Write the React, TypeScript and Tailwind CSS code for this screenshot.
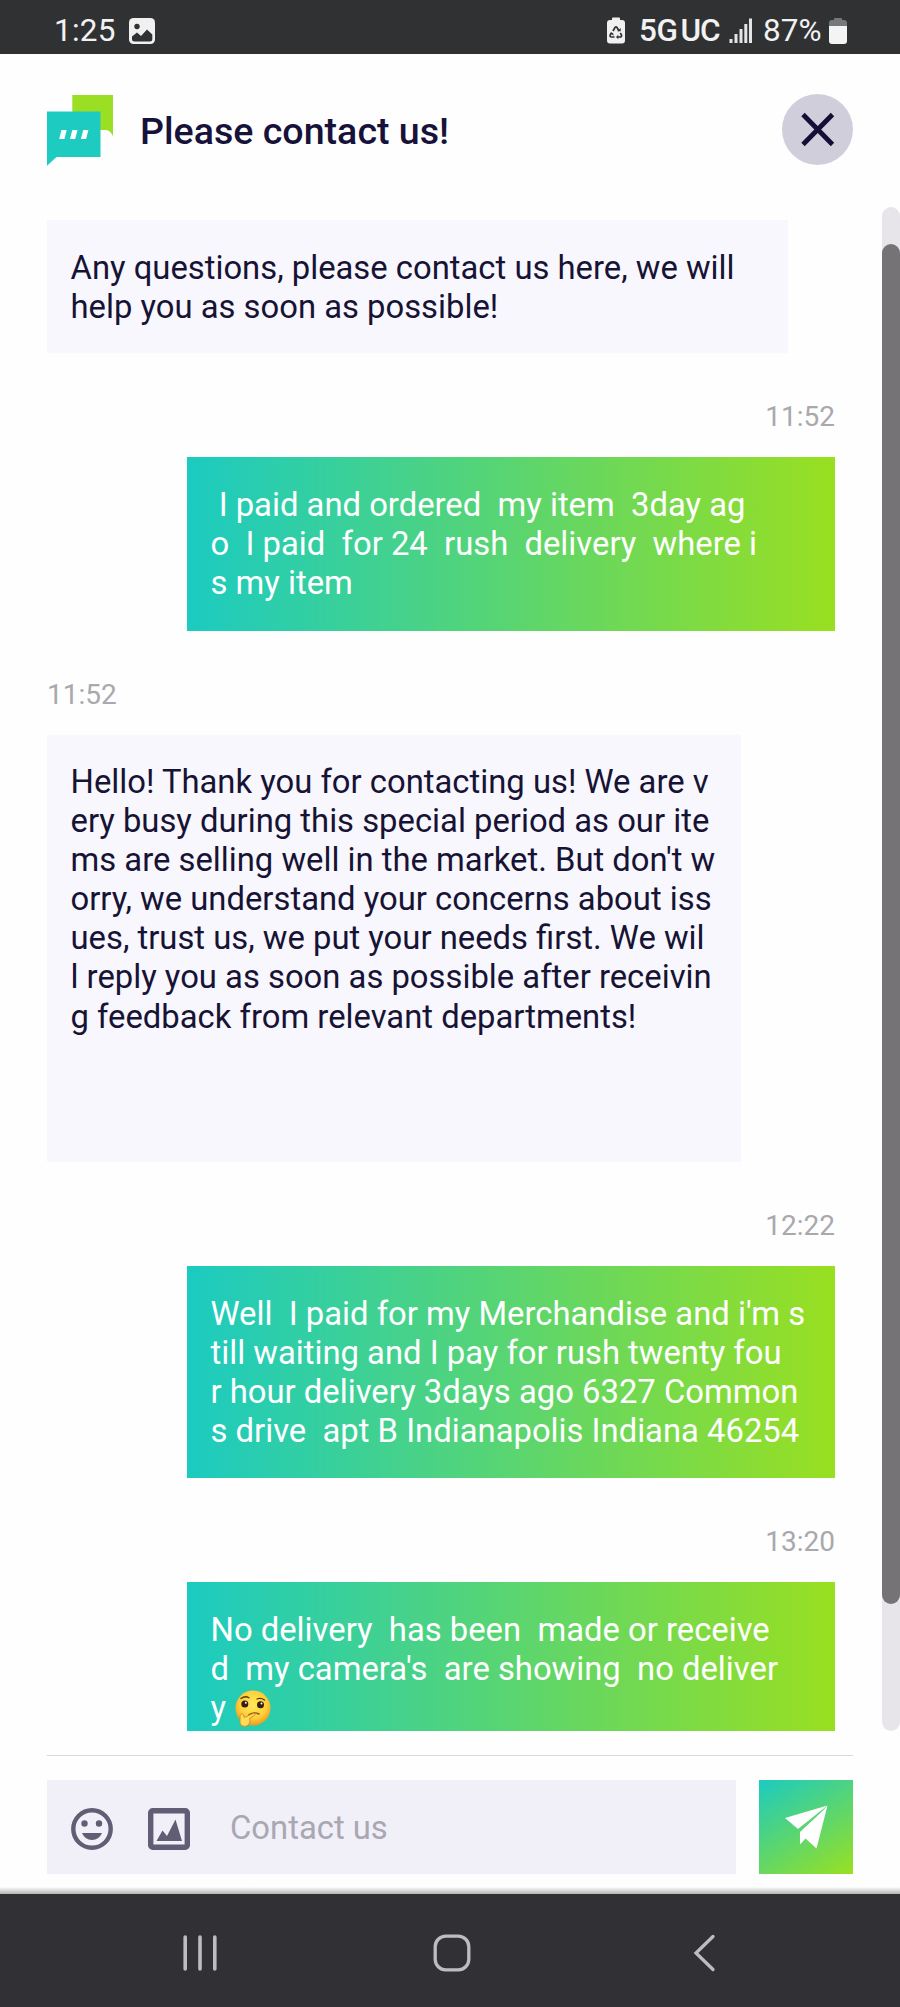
type Message = {
    from: 'me' | 'shop'
    time?: string
    text: string
    emoji?: boolean
    box: string
}

const messages: Message[] = [
    {
        from: 'shop',
        text: 'Any questions, please contact us here, we will\nhelp you as soon as possible!',
        box: 'w-[741px] h-[133px]',
    },
    {
        from: 'me',
        time: '11:52',
        text: ' I paid and ordered  my item  3day ag\no  I paid  for 24  rush  delivery  where i\ns my item',
        box: 'w-[648px] h-[173.5px]',
    },
    {
        from: 'shop',
        time: '11:52',
        text: "Hello! Thank you for contacting us! We are v\nery busy during this special period as our ite\nms are selling well in the market. But don't w\norry, we understand your concerns about iss\nues, trust us, we put your needs first. We wil\nl reply you as soon as possible after receivin\ng feedback from relevant departments!",
        box: 'w-[694px] h-[427.5px]',
    },
    {
        from: 'me',
        time: '12:22',
        text: "Well  I paid for my Merchandise and i'm s\ntill waiting and I pay for rush twenty fou\nr hour delivery 3days ago 6327 Common\ns drive  apt B Indianapolis Indiana 46254",
        box: 'w-[648px] h-[212px]',
    },
    {
        from: 'me',
        time: '13:20',
        text: "No delivery  has been  made or receive\nd  my camera's  are showing  no deliver\ny ",
        emoji: true,
        box: 'w-[648px] h-[173px]',
    },
]

function ThinkingFace() {
    return (
        <svg className="inline-block w-[36px] h-[37px] align-[-8px] ml-[1px]" viewBox="0 0 36 37">
            <defs>
                <radialGradient id="face" cx="0.5" cy="0.4" r="0.6">
                    <stop offset="0" stopColor="#ffe95c" />
                    <stop offset="0.65" stopColor="#fcd03a" />
                    <stop offset="1" stopColor="#f09a1c" />
                </radialGradient>
            </defs>
            <circle cx="18" cy="18" r="17.5" fill="url(#face)" />
            <path d="M6 8.500q4-3 8-.8M22 9q4-1.500 7.500 1" fill="none" stroke="#5d3a12" strokeWidth="1.300" strokeLinecap="round" />
            <circle cx="9.800" cy="14" r="3.500" fill="#3a1d0c" />
            <circle cx="25.500" cy="14.800" r="3.500" fill="#3a1d0c" />
            <circle cx="10.800" cy="12.800" r="1" fill="#fff" />
            <circle cx="26.500" cy="13.600" r="1" fill="#fff" />
            <path d="M14 24.500q5-3 10-.5" fill="none" stroke="#8a5214" strokeWidth="1.400" strokeLinecap="round" />
            <path d="M5 26c1-3 2.800-3 3.500-1l.8 2.400 8.200-3.600c2.500-.8 3 1.200 1 2.300l-4 2.400c1.500 2.500 0 7-4 7.800-3.500.5-6-2-5.500-5.300z" fill="#ffdc58" stroke="#d98a1b" strokeWidth="1" />
        </svg>
    )
}

function StatusBar() {
    return (
        <div className="flex h-[54px] shrink-0 items-center bg-[#303133] pl-[54px] pr-[53px] pt-[7px] text-[31.5px] leading-none text-[#f2f2f3]">
            <span className="w-[75px] tracking-[0.2px]">1:25</span>
            <svg className="w-[26px] h-[26px]" viewBox="0 0 26 26">
                <rect width="26" height="26" rx="4.500" fill="#f0f0f1" />
                <circle cx="8" cy="8.500" r="2.700" fill="#303133" />
                <path d="M3 18.500l5-4 4 3.500 6-6.500 5.300 5v4.500q0 2.500-2.500 2.500H5.500Q3 23.500 3 21z" fill="#303133" />
            </svg>
            <svg className="ml-auto w-[18px] h-[27px]" viewBox="0 0 18 27">
                <path d="M5 3V1.500Q5 .5 6 .5h6q1 0 1 1V3h2q3 0 3 3v17.500q0 3-3 3H3q-3 0-3-3V6q0-3 3-3z" fill="#f0f0f1" />
                <path d="M6 14l2-3.500q1-1.500 2 0l2 3.500M13.300 16l1.200 2q.5 2-1.500 2h-2.500M7.500 20h-3q-2-.3-1.300-2l1.500-2.500" fill="none" stroke="#303133" strokeWidth="1.700" />
                <path d="M10.300 14.200h3.400v-3.200zM11.300 17.700l-2.300 2.300 2.300 2.300zM2.800 16h3.200l.8 2.800z" fill="#303133" />
            </svg>
            <span className="ml-[14px] w-[41.500px] font-medium tracking-[-0.5px]">5G</span>
            <span className="w-[48.500px] font-medium tracking-[-1px]">UC</span>
            <svg className="w-[24px] h-[26px]" viewBox="0 0 24 26" fill="#e4e4e6">
                <rect x="0.500" y="21" width="3" height="4" />
                <rect x="5.500" y="16" width="3" height="9" />
                <rect x="10.500" y="11" width="3" height="14" />
                <rect x="15.300" y="6" width="3" height="19" />
                <rect x="20" y="0.500" width="3" height="24.500" />
            </svg>
            <span className="ml-[10px] w-[66px]">87%</span>
            <svg className="w-[18px] h-[26px]" viewBox="0 0 18 26">
                <path d="M5 2V1q0-1 1-1h6q1 0 1 1v1h2q3 0 3 3v3H0V5q0-3 3-3z" fill="#77787a" />
                <path d="M0 8h18v15q0 3-3 3H3q-3 0-3-3z" fill="#f4f4f5" />
            </svg>
        </div>
    )
}

function Header() {
    return (
        <header className="flex h-[153px] shrink-0 items-start pl-[47px] pr-[47px] pt-[40px]">
            <svg className="mt-[1px] w-[66px] h-[71px]" viewBox="0 0 66 71">
                <path d="M25.300 0H66v41q-3-6-7-6H25.300z" fill="#9adf23" />
                <path d="M0 16.500h53.500V62H9.500L0 70.800z" fill="#1dcbc0" />
                <path d="M14.500 35h5.200l-2.300 9h-5.200zM25.300 35h5.200l-2.300 9H23zM36.200 35h5.200l-2.300 9h-5.200z" fill="#fff" />
            </svg>
            <h1 className="ml-[27px] mt-[15px] text-[37.6px] leading-[44px] font-medium text-[#17123a]">
                Please contact us!
            </h1>
            <button className="ml-auto size-[71px] rounded-full bg-[#d1cedb]">
                <svg className="size-[71px]" viewBox="0 0 71 71">
                    <path d="M21 20.500L50.500 50.500M50.500 20.500L21 50.500" stroke="#150f38" strokeWidth="4.800" />
                </svg>
            </button>
        </header>
    )
}

function Bubble({ message }: { message: Message }) {
    const mine = message.from === 'me'

    return (
        <div className={mine ? 'flex flex-col items-end' : 'flex flex-col items-start'}>
            {message.time && (
                <div className="mb-[23px] h-[34px] text-[28px] leading-[34px] text-[#a9a8ad]">
                    {message.time}
                </div>
            )}
            <div
                className={`${message.box} whitespace-pre px-[23.5px] py-[28.5px] text-[32.8px] leading-[39.1px] ${
                    mine
                        ? 'bg-linear-[90deg,#1bcbc1,#99df20] text-white'
                        : 'bg-[#f8f7fd] text-[#171335]'
                }`}
            >
                {message.text}
                {message.emoji && <ThinkingFace />}
            </div>
        </div>
    )
}

function Composer() {
    return (
        <footer className="mx-[47px] mt-[24px] h-[139px] shrink-0 border-t border-[#d9d7df] pt-[24px]">
            <div className="flex justify-between">
                <div className="flex h-[94px] w-[689px] items-center bg-[#f1f0f9] pl-[24px]">
                    <svg className="mt-[4px] size-[42px]" viewBox="0 0 42 42" fill="#605d74">
                        <circle cx="21" cy="21" r="18.700" fill="none" stroke="#605d74" strokeWidth="4.400" />
                        <circle cx="13.500" cy="15.500" r="3.200" />
                        <circle cx="28" cy="15.500" r="3.200" />
                        <path d="M11 25h20q-3 7-10 7t-10-7z" />
                    </svg>
                    <svg className="ml-[35px] mt-[4px] size-[42px]" viewBox="0 0 42 42" fill="#605d74">
                        <rect x="2.700" y="2.700" width="36.600" height="36.600" rx="2" fill="none" stroke="#605d74" strokeWidth="5.400" />
                        <path d="M8.500 33l6-10.500 4.500 5.500 8.500-16.500L34 33z" />
                    </svg>
                    <span className="ml-[40px] mt-[3px] text-[32.8px] text-[#a9a7b2]">Contact us</span>
                </div>
                <button className="size-[94px] bg-linear-[148deg,#1bcbc1,#99e020]">
                    <svg className="size-[94px]" viewBox="0 0 94 94" fill="#fff">
                        <path d="M26 38L68.500 25.500 39 49z" />
                        <path d="M68.500 25.500L57.500 68.500 46.500 58.500 41 64.500V52L63.500 31z" />
                    </svg>
                </button>
            </div>
        </footer>
    )
}

function NavBar() {
    return (
        <nav className="grid h-[113px] shrink-0 grid-cols-3 place-items-center bg-[#313035] pl-[74px] pr-[70px] pt-[4px]">
            <svg className="size-[38px]" viewBox="0 0 38 38" stroke="#bdbcc1" strokeWidth="3.600" strokeLinecap="round">
                <path d="M4.200 3v32M19 3v32M33.800 3v32" />
            </svg>
            <svg className="size-[38px]" viewBox="0 0 38 38" fill="none" stroke="#bdbcc1" strokeWidth="3.300">
                <rect x="2.200" y="2.200" width="33.600" height="33.600" rx="10.500" />
            </svg>
            <svg className="size-[38px]" viewBox="0 0 38 38" fill="none" stroke="#bdbcc1" strokeWidth="3.300" strokeLinecap="round">
                <path d="M28 2.500L11 19l17 16.500" />
            </svg>
        </nav>
    )
}

export default function App() {
    return (
        <div className="flex h-[2007px] w-[900px] flex-col overflow-hidden bg-[#fefefe] font-['Roboto',sans-serif]">
            <StatusBar />
            <Header />

            <main className="flex h-[1524px] shrink-0 justify-between overflow-hidden">
                <div className="ml-[47px] flex w-[788px] flex-col gap-[47px] overflow-hidden pt-[13px]">
                    {messages.map((message) => (
                        <Bubble key={message.text} message={message} />
                    ))}
                </div>
                <div className="h-full w-[18px] rounded-full bg-[#e7e5e9] pt-[37px]">
                    <div className="h-[1360px] rounded-full bg-[#757376]" />
                </div>
            </main>

            <Composer />
            <div className="-mt-[7px] h-[7px] shrink-0 bg-linear-to-b from-[#fefefe] to-[#b5b5b5]" />
            <NavBar />
        </div>
    )
}
